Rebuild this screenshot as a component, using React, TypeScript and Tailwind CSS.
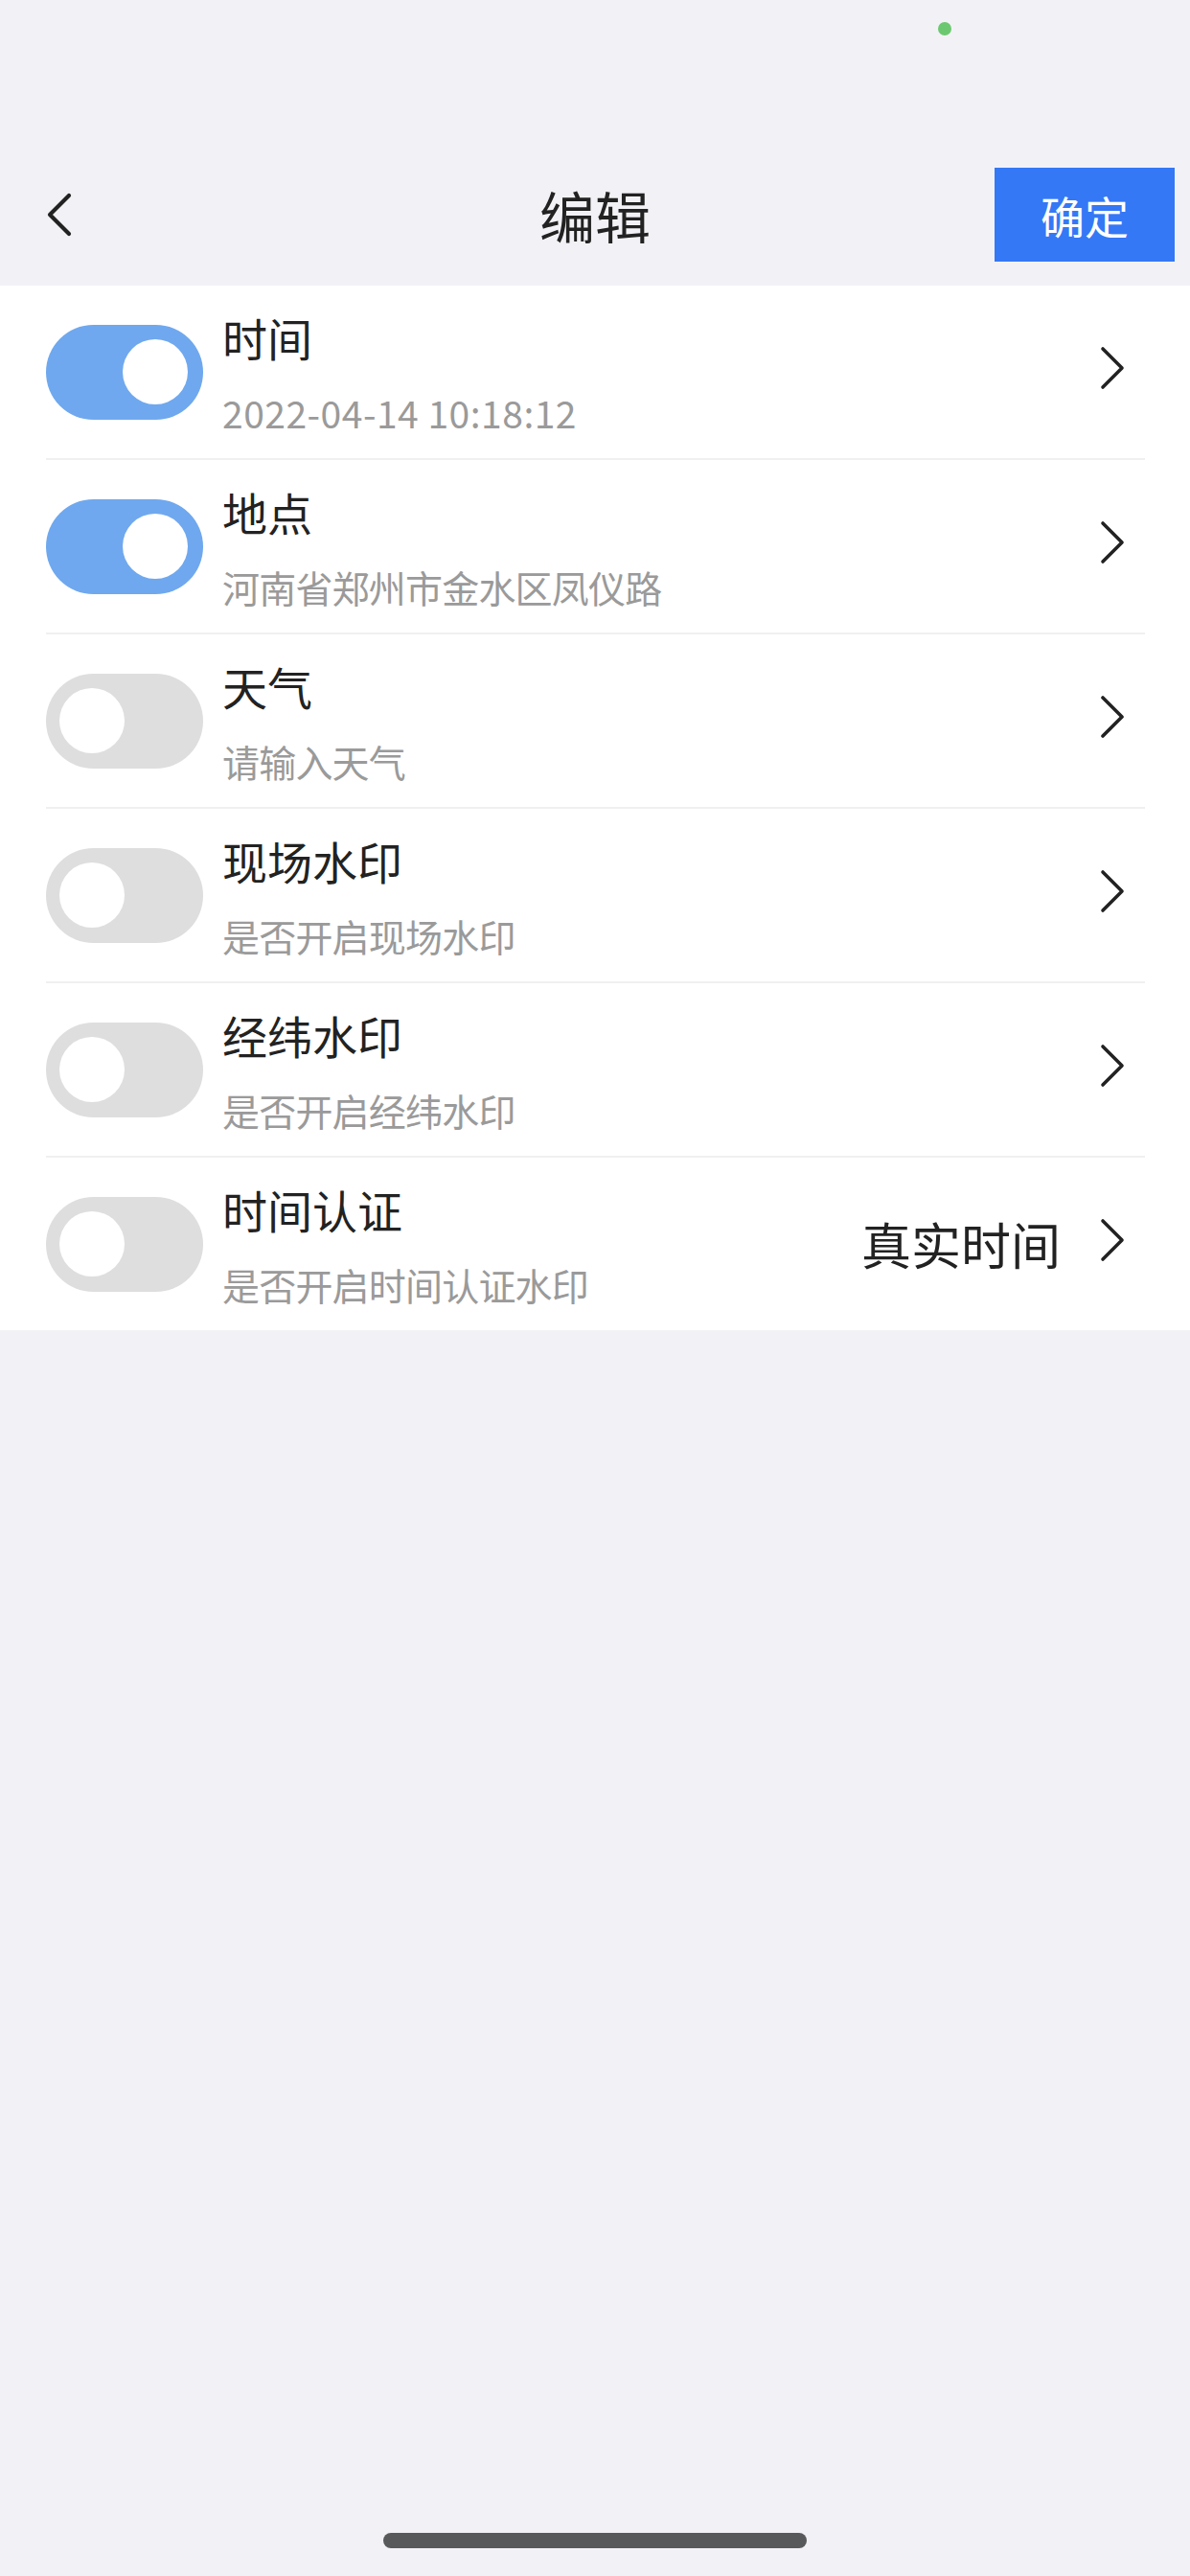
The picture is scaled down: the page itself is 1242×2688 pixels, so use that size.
import React from 'react';

type Row = {
  title: string;
  sub: string;
  on: boolean;
  value?: string;
};

const rows: Row[] = [
  { title: '时间', sub: '2022-04-14 10:18:12', on: true },
  { title: '地点', sub: '河南省郑州市金水区凤仪路', on: true },
  { title: '天气', sub: '请输入天气', on: false },
  { title: '现场水印', sub: '是否开启现场水印', on: false },
  { title: '经纬水印', sub: '是否开启经纬水印', on: false },
  { title: '时间认证', sub: '是否开启时间认证水印', on: false, value: '真实时间' },
];

function Chevron({ dir = 'right', className }: { dir?: 'left' | 'right'; className?: string }) {
  const d = dir === 'right' ? 'M3 3 L23 23 L3 43' : 'M23 3 L3 23 L23 43';
  return (
    <svg viewBox="0 0 26 46" className={className} fill="none">
      <path d={d} stroke="#222" strokeWidth={dir === 'left' ? 4.2 : 3.6} strokeLinecap="round" strokeLinejoin="round" />
    </svg>
  );
}

function Toggle({ on }: { on: boolean }) {
  return (
    <div
      className={
        on
          ? 'w-[164px] h-[99px] shrink-0 rounded-full bg-[#6fa8ee] flex items-center justify-end pr-[16px]'
          : 'w-[164px] h-[99px] shrink-0 rounded-full bg-[#dedede] flex items-center justify-start pl-[14px]'
      }
    >
      <div className="w-[68px] h-[68px] rounded-full bg-white" />
    </div>
  );
}

export default function App() {
  return (
    <div className="min-h-[2688px] bg-[#f2f2f6] flex flex-col font-['Noto_Sans_CJK_SC','Noto_Sans',sans-serif]">
      {/* Status bar */}
      <div className="h-[175px] relative">
        <div className="absolute left-[979px] top-[23px] w-[14px] h-[14px] rounded-full bg-[#6cc870]" />
      </div>

      {/* Nav bar */}
      <div className="h-[98px] grid grid-cols-[1fr_auto_1fr] items-center">
        <div className="pl-[49px] flex items-center">
          <Chevron dir="left" className="w-[26px] h-[46px]" />
        </div>
        <div className="text-[58px] leading-none text-[#222]">编辑</div>
        <div className="flex justify-end pr-[16px]">
          <button className="w-[188px] h-[98px] bg-[#3478f6] text-white text-[46px] leading-none">
            确定
          </button>
        </div>
      </div>
      <div className="h-[25px]" />

      {/* List */}
      <div className="bg-white px-[48px] pr-[47px]">
        {rows.map((r, i) => (
          <div
            key={r.title}
            className={
              i < rows.length - 1
                ? 'h-[182px] flex items-center border-b-2 border-[#f0f0f0]'
                : 'h-[180px] flex items-center'
            }
          >
            <Toggle on={r.on} />
            <div className="ml-[20px] flex-1 flex flex-col mt-[6px]">
              <div className="text-[47px] leading-[56px] text-[#222]">{r.title}</div>
              <div
                className={
                  i === 0
                    ? 'mt-[22px] text-[39px] leading-[56px] text-[#9a9a9a] tracking-[0.5px]'
                    : 'mt-[22px] text-[39px] leading-[56px] text-[#9a9a9a] tracking-[-0.8px]'
                }
              >
                {r.sub}
              </div>
            </div>
            {r.value && <div className="text-[52px] leading-none text-[#222] mr-[41px]">{r.value}</div>}
            <Chevron className="w-[26px] h-[46px] mr-[21px] -mt-[8px]" />
          </div>
        ))}
      </div>

      {/* Home indicator */}
      <div className="mt-auto flex justify-center pb-[29px]">
        <div className="w-[442px] h-[16px] rounded-full bg-[#58595b]" />
      </div>
    </div>
  );
}
